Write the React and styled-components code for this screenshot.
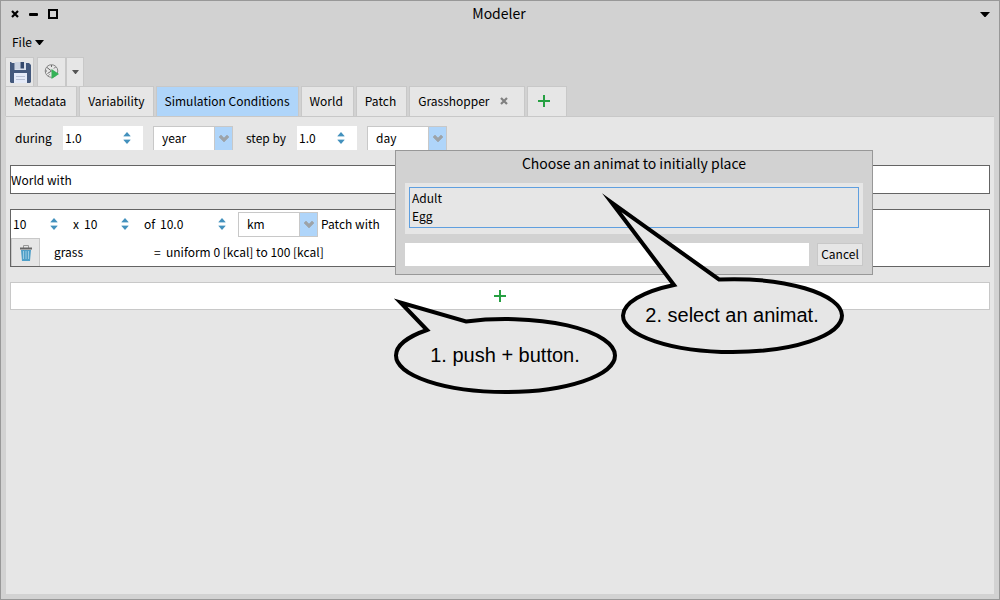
import React from "react";
import styled, { createGlobalStyle } from "styled-components";

const Global = createGlobalStyle`
  *, *::before, *::after { box-sizing: border-box; }
  html, body, #root { height: 100%; }
  body { margin: 0; background: #d2d2d2; }
  body, button, input, select {
    font-family: "Noto Sans CJK JP", "Noto Sans", sans-serif;
    font-size: 12px;
    line-height: 18px;
    color: #000;
  }
  button, input, select { margin: 0; padding: 0; border: 0; border-radius: 0; outline: 0; background: none; }
  svg { display: block; flex-shrink: 0; }
`;

const Window = styled.div`
  min-height: 100%;
  display: flex;
  flex-direction: column;
  background: #d2d2d2;
  border: 1px solid #989898;
  padding: 0 4px 5px;
`;

const TitleBar = styled.header`
  display: flex;
  align-items: center;
  justify-content: space-between;
  height: 26px;
`;

const WindowButtons = styled.div`
  display: flex;
  width: 60px;
`;

const IconButton = styled.button`
  display: flex;
  align-items: center;
  justify-content: center;
  width: 19px;
  height: 20px;
`;

const TitleEnd = styled.div`
  display: flex;
  justify-content: flex-end;
  width: 60px;
`;

const Title = styled.h1`
  margin: 0;
  padding: 0 2px 2px 0;
  font-size: 14px;
  line-height: 20px;
  font-weight: 400;
`;

const MenuBar = styled.nav`
  display: flex;
  align-items: center;
  height: 30px;
  padding-left: 7px;
`;

const MenuButton = styled.button`
  display: flex;
  align-items: center;
  gap: 3px;
`;

const Toolbar = styled.div`
  display: flex;
  height: 29px;
`;

const ToolButton = styled.button`
  display: flex;
  align-items: center;
  justify-content: center;
  width: ${(p) => p.$width}px;
  height: 29px;
  margin-right: ${(p) => p.$gap || 0}px;
  background: #e6e6e6;
  border: 1px solid #c8c8c8;
  border-bottom: 0;
`;

const TabRow = styled.div`
  display: flex;
  gap: 2px;
  height: 30px;
`;

const Tab = styled.button`
  display: flex;
  align-items: center;
  gap: 10px;
  height: 30px;
  padding: 0 ${(p) => p.$end || 10}px 2px ${(p) => p.$start || 8}px;
  background: ${(p) => (p.$active ? "#afd5fa" : "#e6e6e6")};
  border: 1px solid #c8c8c8;
  border-bottom: 0;
  white-space: nowrap;
`;

const Page = styled.main`
  flex: 1;
  position: relative;
  margin: 0 1px;
  background: #e6e6e6;
  border-top: 1px solid #c8c8c8;
  padding: 9px 4px;
`;

const TimeRow = styled.div`
  display: flex;
  align-items: center;
  height: 24px;
  padding-left: 5px;
  margin-bottom: 15px;
`;

const Caption = styled.label`
  width: ${(p) => p.$width}px;
  white-space: nowrap;
`;

const SpinBox = styled.span`
  display: flex;
  align-items: center;
  justify-content: space-between;
  width: ${(p) => p.$width}px;
  height: 24px;
  padding-right: 12px;
  margin-right: ${(p) => p.$gap}px;
  background: #fff;
`;

const SpinInput = styled.input`
  flex: 1;
  min-width: 0;
  height: 24px;
  padding: 0 0 2px 2px;
`;

const Select = styled.span`
  position: relative;
  display: flex;
  width: 80px;
  height: ${(p) => p.$height}px;
  margin-right: ${(p) => p.$gap}px;
  background: #fff;
  border: 1px solid #c8c8c8;
  border-bottom-width: ${(p) => (p.$open ? 0 : 1)}px;

  select {
    appearance: none;
    flex: 1;
    width: 100%;
    padding: 0 0 1px 8px;
  }
`;

const SelectArrow = styled.span`
  position: absolute;
  top: 0;
  right: 0;
  bottom: 0;
  display: flex;
  align-items: center;
  justify-content: center;
  width: 18px;
  border-left: 1px solid #c8c8c8;
  background: #afd5fa;
  pointer-events: none;
`;

const Block = styled.section`
  display: flex;
  flex-direction: column;
  justify-content: center;
  min-height: 29px;
  margin-bottom: 15px;
  background: #fff;
  border: 1px solid #646464;
`;

const PatchRow = styled.div`
  display: flex;
  align-items: center;
  height: 28px;
`;

const TrashButton = styled(ToolButton)`
  height: 28px;
  margin-right: 14px;
`;

const AddButton = styled.button`
  display: flex;
  align-items: center;
  justify-content: center;
  width: 100%;
  height: 28px;
  background: #fff;
  border: 1px solid #c8c8c8;
`;

const Dialog = styled.div`
  position: absolute;
  z-index: 2;
  top: 33px;
  left: 389px;
  width: 478px;
  padding: 2px 9px 8px;
  background: #d2d2d2;
  border: 1px solid #989898;
`;

const DialogTitle = styled.h2`
  margin: 0 0 10px;
  font-size: 14px;
  line-height: 20px;
  font-weight: 400;
  text-align: center;
`;

const ListFrame = styled.div`
  padding: 4px 4px 6px;
  margin-bottom: 9px;
  background: #e6e6e6;
`;

const List = styled.ul`
  list-style: none;
  margin: 0;
  padding: 1px 2px 2px;
  border: 1px solid #5f9fdf;
`;

const DialogFooter = styled.div`
  display: flex;
  gap: 8px;
  height: 23px;
`;

const FilterInput = styled.input`
  flex: 1;
  padding: 0 2px;
  background: #fff;
`;

const CancelButton = styled.button`
  width: 46px;
  padding-bottom: 2px;
  background: #e6e6e6;
  border: 1px solid #c8c8c8;
`;

const Callout = styled.div`
  position: absolute;
  z-index: 3;
  top: ${(p) => p.$top}px;
  left: ${(p) => p.$left}px;
  width: 222px;
  height: ${(p) => p.$height}px;
  display: flex;
  align-items: flex-end;
  pointer-events: none;

  svg { position: absolute; inset: 0; overflow: visible; }
`;

const CalloutText = styled.p`
  position: relative;
  width: 100%;
  margin: 0 0 27px;
  font-family: "Liberation Sans", Arial, sans-serif;
  font-size: 20px;
  line-height: 24px;
  text-align: center;
`;

const DownTriangle = ({ width = 10, height = 5, color = "#000" }) => (
  <svg width={width} height={height} viewBox="0 0 10 5" preserveAspectRatio="none" aria-hidden="true">
    <path d="M0 0H10L5.5 5H4.5Z" fill={color} />
  </svg>
);

const SpinArrows = () => (
  <svg width="8" height="12" viewBox="0 0 8 12" aria-hidden="true">
    <path d="M4 0L7.5 4H.5Z M4 12L7.5 8H.5Z" fill="#4391bd" />
    <path d="M.5 4.5h7M.5 7.5h7" stroke="#b5d5e5" />
  </svg>
);

const Chevron = () => (
  <svg width="12" height="9" viewBox="0 0 12 9" aria-hidden="true">
    <path d="M1 3L3 1L6 4L9 1L11 3L6 8Z" fill="#9da3a8" stroke="#9da3a8" strokeWidth="0.6" />
  </svg>
);

const Plus = () => (
  <svg width="12" height="12" viewBox="0 0 12 12" aria-hidden="true">
    <path d="M6 0V12M0 6H12" stroke="#26a042" strokeWidth="2" />
  </svg>
);

const Cross = ({ color }) => (
  <svg width="8" height="8" viewBox="0 0 8 8" aria-hidden="true">
    <path d="M1 1L7 7M7 1L1 7" stroke={color} strokeWidth="2.2" />
  </svg>
);

const SaveIcon = () => (
  <svg width="23" height="21" viewBox="-2 0 23 21" aria-hidden="true">
    <path d="M0 0H1.5V1H19L21 3V20L20 21H1L0 20Z" fill="#43587c" />
    <path d="M4.5 0H16V8H4.5Z" fill="#d9dfea" />
    <path d="M5 0H10V7H5Z" fill="#cbd3e1" />
    <path d="M10.5 0H14V6.5H10.5Z" fill="#35496c" />
    <path d="M4 11H17V21H4Z" fill="#e4eaf8" />
    <path d="M6 14.5H15M6 17.5H15" stroke="#b7c0d4" />
  </svg>
);

const RunIcon = () => (
  <svg width="16" height="16" viewBox="0 0 16 16" aria-hidden="true">
    <circle cx="7.5" cy="7" r="6.3" fill="#e6e6e6" stroke="#858585" />
    <path d="M3 3.5L7.5 7L3.5 9.5M7.5 1V3M11.5 3L10 4.5M1.5 7H3M4.5 11.5L5.5 10.5" fill="none" stroke="#6a6a6a" />
    <path d="M7.5 5L15 10L7.5 15Z" fill="#35b257" />
  </svg>
);

const TrashIcon = () => (
  <svg width="12" height="16" viewBox="0 0 12 16" aria-hidden="true">
    <path d="M3.5 3V.5H8.5V3" fill="none" stroke="#999" />
    <path d="M0 2.5H12V4.5H0Z" fill="#666" />
    <path d="M1 5H11L10 16H2Z" fill="#4f9fc8" />
    <path d="M3.5 6V14M6 6V14M8.5 6V14" stroke="#9bcbe2" />
  </svg>
);

function Spinner({ id, label, value, width, gap }) {
  return (
    <SpinBox $width={width} $gap={gap}>
      <SpinInput id={id} aria-label={label} defaultValue={value} />
      <SpinArrows />
    </SpinBox>
  );
}

function Combo({ label, options, height = 25, gap = 0, open }) {
  return (
    <Select $height={height} $gap={gap} $open={open}>
      <select aria-label={label}>
        {options.map((o) => <option key={o}>{o}</option>)}
      </select>
      <SelectArrow><Chevron /></SelectArrow>
    </Select>
  );
}

export default function App() {
  return (
    <>
      <Global />
      <Window>
        <TitleBar>
          <WindowButtons>
            <IconButton aria-label="Close"><Cross color="#000" /></IconButton>
            <IconButton aria-label="Minimize">
              <svg width="9" height="3"><rect width="9" height="3" rx="1" /></svg>
            </IconButton>
            <IconButton aria-label="Maximize">
              <svg width="10" height="10"><rect x="1" y="1" width="8" height="8" fill="none" stroke="#000" strokeWidth="2" /></svg>
            </IconButton>
          </WindowButtons>
          <Title>Modeler</Title>
          <TitleEnd>
            <IconButton aria-label="Window menu"><DownTriangle /></IconButton>
          </TitleEnd>
        </TitleBar>
        <MenuBar>
          <MenuButton>File <DownTriangle width={9} /></MenuButton>
        </MenuBar>
        <Toolbar>
          <ToolButton $width={29} $gap={3} aria-label="Save"><SaveIcon /></ToolButton>
          <ToolButton $width={29} aria-label="Run"><RunIcon /></ToolButton>
          <ToolButton $width={18} aria-label="Run options"><DownTriangle width={7} height={4} color="#555" /></ToolButton>
        </Toolbar>
        <TabRow>
          <Tab>Metadata</Tab>
          <Tab $end={8}>Variability</Tab>
          <Tab $active $end={8}>Simulation Conditions</Tab>
          <Tab>World</Tab>
          <Tab>Patch</Tab>
          <Tab $end={16}>Grasshopper <Cross color="#808080" /></Tab>
          <Tab $start={10} $end={16} aria-label="Add tab"><Plus /></Tab>
        </TabRow>
        <Page>
          <TimeRow>
            <Caption $width={48} htmlFor="during">during</Caption>
            <Spinner id="during" value="1.0" width={80} gap={10} />
            <Combo label="Duration unit" options={["year", "day"]} height={24} gap={13} open />
            <Caption $width={51} htmlFor="step">step by</Caption>
            <Spinner id="step" value="1.0" width={60} gap={10} />
            <Combo label="Step unit" options={["day", "year"]} height={24} open />
          </TimeRow>
          <Block>World with</Block>
          <Block>
            <PatchRow>
              <Spinner label="Columns" value="10" width={59} gap={3} />
              <Caption $width={9} htmlFor="rows">x</Caption>
              <Spinner id="rows" value="10" width={59} gap={3} />
              <Caption $width={14} htmlFor="size">of</Caption>
              <Spinner id="size" value="10.0" width={80} gap={0} />
              <Combo label="Size unit" options={["km", "m"]} gap={3} />
              <span>Patch with</span>
            </PatchRow>
            <PatchRow>
              <TrashButton $width={29} aria-label="Remove grass"><TrashIcon /></TrashButton>
              <Caption $width={100} as="span">grass</Caption>
              <Caption $width={12} as="span">=</Caption>
              <Caption $width={160} as="span">uniform 0 [kcal] to 100 [kcal]</Caption>
            </PatchRow>
          </Block>
          <AddButton aria-label="Add animat"><Plus /></AddButton>
          <Dialog role="dialog" aria-labelledby="dialog-title">
            <DialogTitle id="dialog-title">Choose an animat to initially place</DialogTitle>
            <ListFrame>
              <List>
                <li>Adult</li>
                <li>Egg</li>
              </List>
            </ListFrame>
            <DialogFooter>
              <FilterInput aria-label="Filter animats" />
              <CancelButton>Cancel</CancelButton>
            </DialogFooter>
          </Dialog>
          <Callout $top={181} $left={388} $height={96}>
            <svg width="224" height="96" viewBox="394 298 224 96" aria-hidden="true">
              <path d="M466 321.5A109.5 36.5 0 0 1 615 355.5A109.5 36.5 0 0 1 396 355.5A109.5 36.5 0 0 1 427 330L400.5 302.500Z" fill="#e6e6e6" stroke="#000" strokeWidth="4" strokeMiterlimit="10" />
            </svg>
            <CalloutText>1. push + button.</CalloutText>
          </Callout>
          <Callout $top={73} $left={615} $height={164}>
            <svg width="224" height="164" viewBox="621 190 224 164" aria-hidden="true">
              <path d="M719 279.5A109.5 36.5 0 0 1 842 315.5A109.5 36.5 0 0 1 623 315.5A109.5 36.5 0 0 1 674 285L611.6 202.5Z" fill="#e6e6e6" stroke="#000" strokeWidth="4" strokeMiterlimit="10" />
            </svg>
            <CalloutText>2. select an animat.</CalloutText>
          </Callout>
        </Page>
      </Window>
    </>
  );
}
